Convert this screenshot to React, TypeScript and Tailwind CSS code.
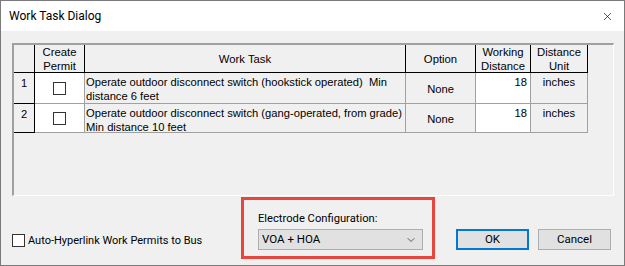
import { ChevronDown, X } from 'lucide-react';

const rows = [
  { n: 1, task: ['Operate outdoor disconnect switch (hookstick operated)  Min', 'distance 6 feet'], h: 'h-[31px]' },
  { n: 2, task: ['Operate outdoor disconnect switch (gang-operated, from grade)', 'Min distance 10 feet'], h: 'h-[29px]' },
];

const ui = { fontFamily: '"Segoe UI", Roboto, sans-serif' };
const grid = { fontFamily: 'Arial, "Liberation Sans", sans-serif' };

function Box() {
  return <div className="w-[13px] h-[13px] border border-[#333] bg-white" />;
}

export default function App() {
  return (
    <div className="w-[625px] h-[266px] border border-[#7a7a7a] bg-[#f0f0f0] flex flex-col text-black" style={ui}>
      {/* Title bar */}
      <div className="h-[30px] bg-white flex items-center justify-between pl-[8px] pr-[10px] shrink-0">
        <span className="text-[12px]">Work Task Dialog</span>
        <X className="w-[13px] h-[13px]" strokeWidth={1.2} />
      </div>

      {/* Grid */}
      <div className="mt-[12px] ml-[11px] w-[602px] h-[153px] border-t-2 border-l-2 border-[#a0a0a0] border-r border-b border-r-white border-b-white shrink-0 whitespace-pre" style={grid}>
        <div className="flex h-[28px] text-[11.3px] leading-[14px] text-center">
          <div className="w-[21px] border-r border-b border-black" />
          <div className="w-[50px] border-r border-b border-black flex items-center justify-center">Create<br />Permit</div>
          <div className="w-[321px] border-r border-b border-black flex items-center justify-center">Work Task</div>
          <div className="w-[70px] border-r border-b border-black flex items-center justify-center">Option</div>
          <div className="w-[55px] border-r border-b border-black flex items-center justify-center">Working<br />Distance</div>
          <div className="w-[57px] border-r border-b border-black flex items-center justify-center">Distance<br />Unit</div>
        </div>
        {rows.map((r) => (
          <div key={r.n} className={`flex ${r.h} text-[11.2px] leading-[14px]`}>
            <div className="w-[21px] border-r border-b border-black text-center pt-[3px]">{r.n}</div>
            <div className="w-[50px] bg-white border-r border-b border-[#a0a0a0] flex items-center justify-center">
              <Box />
            </div>
            <div className="w-[321px] border-r border-b border-[#a0a0a0] pl-[1px] pt-[2px] overflow-hidden">
              {r.task[0]}
              <br />
              {r.task[1]}
            </div>
            <div className="w-[70px] border-r border-b border-[#a0a0a0] flex items-center justify-center pt-[2px]">None</div>
            <div className="w-[55px] bg-white border-r border-b border-[#a0a0a0] text-right pr-[3px] pt-[2px]">18</div>
            <div className="w-[57px] border-r border-b border-[#a0a0a0] text-center pt-[2px]">inches</div>
          </div>
        ))}
      </div>

      {/* Bottom */}
      <div className="flex items-end flex-1 pb-[6px]">
        <div className="flex items-center gap-[3px] ml-[11px] mb-[10px] w-[229px]">
          <div className="w-[13px] h-[13px] border border-[#333] bg-white" />
          <span className="text-[11px]">Auto-Hyperlink Work Permits to Bus</span>
        </div>
        <div className="w-[194px] h-[62px] border-[3px] border-[#e8453c] pl-[14px] pt-[12px] flex flex-col">
          <span className="text-[11.2px] leading-[14px]">Electrode Configuration:</span>
          <div className="mt-[3px] w-[165px] h-[21px] bg-[#e1e1e1] border border-[#adadad] flex items-center justify-between pl-[3px] pr-[5px]">
            <span className="text-[11.5px]">VOA + HOA</span>
            <ChevronDown className="w-[12px] h-[12px] text-[#222]" strokeWidth={1.4} />
          </div>
        </div>
        <div className="flex gap-[9px] ml-[21px] mb-[9px]">
          <button className="w-[73px] h-[21px] bg-[#e1e1e1] border-2 border-[#0078d7] text-[11.5px]">OK</button>
          <button className="w-[73px] h-[21px] bg-[#e1e1e1] border border-[#adadad] text-[11.5px]">Cancel</button>
        </div>
      </div>
    </div>
  );
}
